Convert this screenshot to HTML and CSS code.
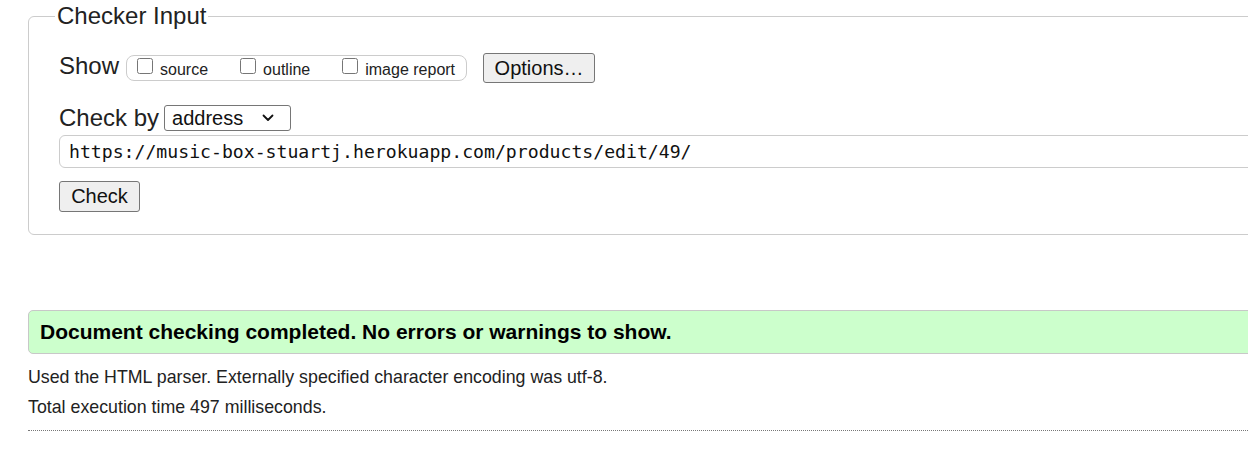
FILE: index.html
```html
<!DOCTYPE html>
<html lang="en">
<head>
<meta charset="utf-8">
<title>Checker Input</title>
<link rel="stylesheet" href="styles.css">
</head>
<body>
<div class="page">
  <form class="checker">
    <fieldset class="checker-set">
      <legend class="checker-legend">Checker Input</legend>
      <div class="show-row">
        <span class="row-label show-label">Show</span>
        <span class="show-box">
          <label class="opt"><input type="checkbox" class="cb"><span>source</span></label>
          <label class="opt"><input type="checkbox" class="cb"><span>outline</span></label>
          <label class="opt"><input type="checkbox" class="cb"><span>image report</span></label>
        </span>
        <button type="button" class="btn btn-options">Options…</button>
      </div>
      <div class="by-row">
        <span class="row-label">Check by</span>
        <span class="select-wrap">
          <select class="by-select">
            <option>address</option>
            <option>file upload</option>
            <option>text input</option>
          </select>
          <svg class="chevron" width="12" height="8" viewBox="0 0 12 8" aria-hidden="true">
            <path d="M1.5 1.5 L6 6 L10.5 1.5" fill="none" stroke="#111" stroke-width="1.8" stroke-linecap="round" stroke-linejoin="round"/>
          </svg>
        </span>
      </div>
      <input type="text" class="url-input" value="https://music-box-stuartj.herokuapp.com/products/edit/49/">
      <div class="submit-row">
        <button type="button" class="btn btn-check">Check</button>
      </div>
    </fieldset>
  </form>
  <div class="success">Document checking completed. No errors or warnings to show.</div>
  <p class="details">Used the HTML parser. Externally specified character encoding was utf-8.</p>
  <p class="details">Total execution time 497 milliseconds.</p>
  <hr class="dotted">
</div>
</body>
</html>
```
FILE: styles.css
```css
html, body {
  margin: 0;
  padding: 0;
  background: #fff;
  overflow: hidden;
}
body {
  font-family: "Liberation Sans", Arial, sans-serif;
  color: #222;
}
.page {
  width: 1400px;
  margin-left: 28px;
}
.checker {
  margin: 0;
}
.checker-set {
  margin: 2px 0 0 0;
  padding: 23px 0 22px 30px;
  border: 1px solid #ccc;
  border-radius: 6px;
  min-width: 0;
}
.checker-legend {
  font-size: 24px;
  line-height: 28px;
  padding: 0 2px;
  margin-left: -4px;
}
.show-row {
  display: flex;
  align-items: center;
  height: 30px;
}
.row-label {
  font-size: 24px;
  line-height: 28px;
}
.show-label {
  margin-bottom: 4px;
}
.show-box {
  display: flex;
  align-items: center;
  height: 24px;
  margin-left: 7px;
  padding: 0 11px 0 10px;
  border: 1px solid #ccc;
  border-radius: 8px;
  gap: 32px;
}
.opt {
  display: flex;
  align-items: center;
  gap: 7px;
  font-size: 16px;
  line-height: 18px;
}
.opt span {
  margin-top: 3px;
}
.cb {
  width: 16px;
  height: 16px;
  margin: 0;
  margin-bottom: 4px;
}
.btn {
  font-family: "Liberation Sans", Arial, sans-serif;
  font-size: 20px;
  line-height: 23px;
  color: #111;
  background: #efefef;
  border: 1px solid #767676;
  border-radius: 3px;
  padding: 0;
  margin: 0;
}
.btn-options {
  margin-left: 16px;
  width: 112px;
  height: 30px;
}
.by-row {
  display: flex;
  align-items: center;
  margin-top: 21px;
  height: 28px;
}
.select-wrap {
  position: relative;
  display: flex;
  margin-left: 5px;
}
.by-select {
  -webkit-appearance: none;
  appearance: none;
  width: 127px;
  height: 26px;
  font-family: "Liberation Sans", Arial, sans-serif;
  font-size: 20px;
  line-height: 24px;
  color: #111;
  background: #fff;
  border: 1px solid #767676;
  border-radius: 3px;
  padding: 0 0 0 7px;
  margin: 0;
}
.chevron {
  position: absolute;
  right: 17px;
  top: 9px;
  pointer-events: none;
}
.url-input {
  display: block;
  box-sizing: border-box;
  margin: 3px 0 0 0;
  width: 1360px;
  height: 33px;
  padding: 0 9px;
  font-family: "DejaVu Sans Mono", "Liberation Mono", monospace;
  font-size: 18.15px;
  color: #111;
  border: 1px solid #ccc;
  border-radius: 6px;
  outline: none;
}
.submit-row {
  margin-top: 13px;
  display: flex;
}
.btn-check {
  width: 81px;
  height: 31px;
}
.success {
  margin-top: 75px;
  box-sizing: border-box;
  height: 44px;
  padding: 9px 11px;
  font-size: 21px;
  line-height: 24px;
  font-weight: bold;
  color: #000;
  background: #ccffcc;
  border: 1px solid #c8c8c8;
  border-radius: 5px;
}
.details {
  margin: 13px 0 0 0;
  font-size: 17.8px;
  line-height: 20px;
}
.details + .details {
  margin-top: 10px;
}
.dotted {
  margin: 13px 0 0 0;
  border: 0;
  border-top: 1px dotted #777;
  height: 0;
}
```
